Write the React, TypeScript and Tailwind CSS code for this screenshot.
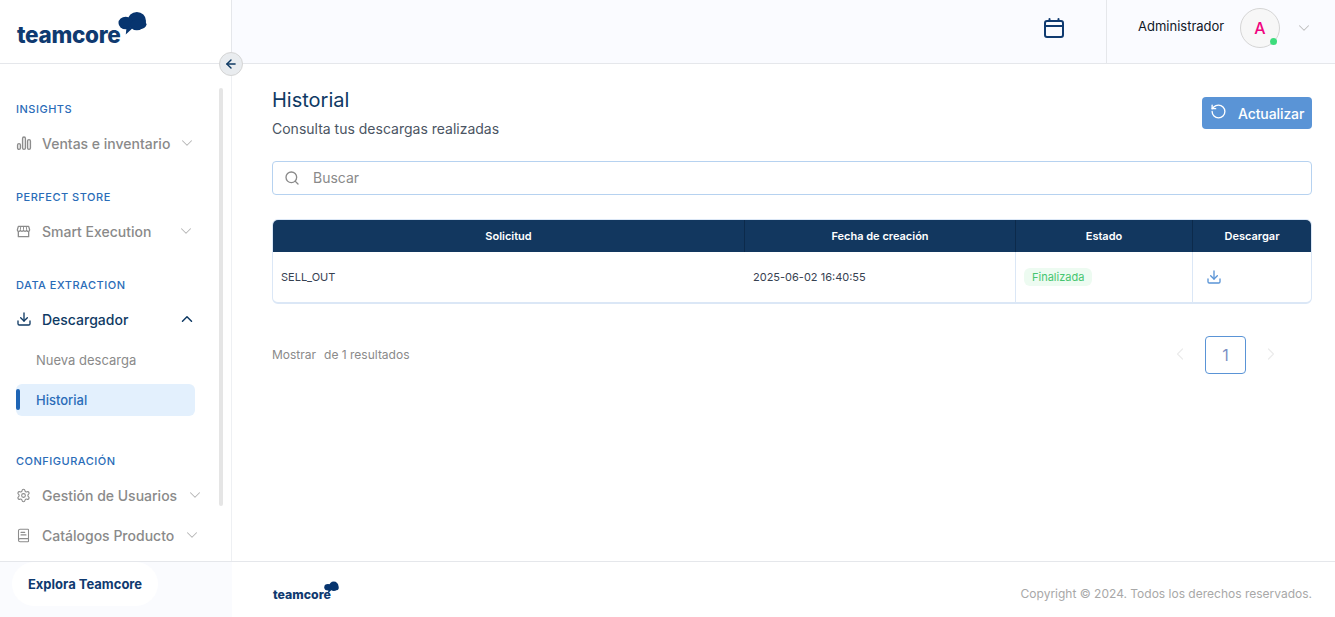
import React from 'react';
import { ArrowLeft, ChevronDown, ChevronLeft, ChevronRight, ChevronUp, Download, RotateCcw, Search, Settings, BookText } from 'lucide-react';

const font = "font-['Inter','Liberation_Sans',sans-serif]";

const Logo = ({ small }: { small?: boolean }) => (
  <div className={small ? 'relative mt-[2px] h-[20px] w-[66px]' : 'relative mb-[6px] ml-[1px] h-[36px] w-[130px]'}>
    <span
      className={
        small
          ? 'absolute bottom-[-3px] left-0 text-[12.3px] leading-[18px] font-extrabold text-[#0f3a70]'
          : 'absolute bottom-[-4px] left-0 text-[22.5px] leading-[32px] font-extrabold tracking-[-0.3px] text-[#0f3a70]'
      }
    >
      teamcore
    </span>
    <svg
      viewBox="0 0 30 24"
      className={small ? 'absolute top-0 right-0 h-[13px] w-[15px]' : 'absolute top-0 right-0 h-[25px] w-[29px]'}
      fill="#07356f"
    >
      <circle cx="19.500" cy="9.500" r="9.500" />
      <ellipse cx="8" cy="11.500" rx="7.500" ry="6.500" />
      <ellipse cx="21" cy="13" rx="8.500" ry="5" />
      <path d="M9 15 8 23.500 15 17z" />
    </svg>
  </div>
);

const SectionLabel = ({ children, className = '' }: { children: React.ReactNode; className?: string }) => (
  <div className={`ml-4 text-[11px] leading-[16px] font-medium tracking-[0.5px] text-[#2a6cb8] ${className}`}>{children}</div>
);

const BarsIcon = () => (
  <svg viewBox="0 0 16 16" className="h-[16px] w-[16px]" fill="none" stroke="#8c8c8c" strokeWidth="1.4">
    <rect x="1.600" y="8.600" width="2.800" height="5.800" rx="1.400" />
    <rect x="6.600" y="2" width="2.800" height="12.400" rx="1.400" />
    <rect x="11.600" y="4.600" width="2.800" height="9.800" rx="1.400" />
  </svg>
);

const StoreIcon = () => (
  <svg viewBox="0 0 16 16" className="h-[15px] w-[15px]" fill="none" stroke="#8c8c8c" strokeWidth="1.4" strokeLinejoin="round">
    <path d="M2.500 2.500h11l1 3.500a1.600 1.600 0 0 1-3.200.6 1.700 1.700 0 0 1-3.300 0 1.700 1.700 0 0 1-3.300 0A1.600 1.600 0 0 1 1.500 6z" />
    <path d="M2.500 8v5.500h11V8" />
    <path d="M5 2.500 4.700 6M8 2.500V6M11 2.500l.3 3.500" strokeWidth="1" />
  </svg>
);

const CalendarIcon = () => (
  <svg viewBox="0 0 20 20" className="h-[20px] w-[20px]" fill="none" stroke="#0f3a70" strokeWidth="2" strokeLinecap="round">
    <rect x="1" y="3" width="18" height="16" rx="2" />
    <path d="M1 8h18M5.500 1v2M14.500 1v2" />
  </svg>
);

const NavItem = ({ icon, label, chevronGap }: { icon: React.ReactNode; label: string; chevronGap: string }) => (
  <div className="ml-4 flex h-[24px] items-center text-[14px] font-medium text-[#8a8a8a]">
    <span className="flex w-[26px] shrink-0 items-center">{icon}</span>
    <span>{label}</span>
    <ChevronDown className={`h-[18px] w-[18px] stroke-[1.4] text-[#b5b5b5] ${chevronGap}`} />
  </div>
);

export default function App() {
  return (
    <div className={`relative flex h-screen w-full overflow-hidden bg-white ${font}`}>
      <aside className="flex w-[232px] shrink-0 flex-col">
        <div className="flex h-[64px] shrink-0 items-center border-r border-b border-[#e5e7eb] pr-[84px] pl-[16px]">
          <Logo />
        </div>
        <nav className="flex-1 overflow-hidden border-r border-[#eef0f3] pt-[37px]">
          <SectionLabel>INSIGHTS</SectionLabel>
          <div className="mt-[14px]">
            <NavItem icon={<BarsIcon />} label="Ventas e inventario" chevronGap="ml-[8px]" />
          </div>
          <SectionLabel className="mt-[34px]">PERFECT STORE</SectionLabel>
          <div className="mt-[14px]">
            <NavItem icon={<StoreIcon />} label="Smart Execution" chevronGap="ml-[26px]" />
          </div>
          <SectionLabel className="mt-[34px]">DATA EXTRACTION</SectionLabel>
          <div className="mt-[14px] ml-4 flex h-[24px] items-center text-[14px] font-medium text-[#0f3a64]">
            <span className="flex w-[26px] shrink-0 items-center">
              <Download className="h-[16px] w-[16px] stroke-[2] text-[#0f3a64]" />
            </span>
            <span>Descargador</span>
            <ChevronUp className="ml-[50px] h-[18px] w-[18px] stroke-[2] text-[#0f3a64]" />
          </div>
          <div className="mt-[18px] ml-[36px] flex h-[24px] items-center text-[13px] text-[#8a8a8a]">Nueva descarga</div>
          <div className="relative mt-[11px] ml-[16px] flex h-[32px] w-[179px] items-center rounded-[6px] bg-[#e3f0fd] pt-[1px] pl-[20px] text-[13px] font-medium text-[#2a6cb8]">
            <span className="absolute top-[5px] left-0 h-[21px] w-[4px] rounded-[2px] bg-[#1f65b5]" />
            Historial
          </div>
          <SectionLabel className="mt-[37px]">CONFIGURACIÓN</SectionLabel>
          <div className="mt-[14px]">
            <NavItem icon={<Settings className="h-[15px] w-[15px] stroke-[1.7] text-[#8c8c8c]" />} label="Gestión de Usuarios" chevronGap="ml-[9px]" />
          </div>
          <div className="mt-[16px]">
            <NavItem icon={<BookText className="h-[15px] w-[15px] stroke-[1.7] text-[#8c8c8c]" />} label="Catálogos Producto" chevronGap="ml-[9px]" />
          </div>
        </nav>
        <div className="flex h-[56px] shrink-0 items-start border-t border-[#e5e7eb] bg-[#fafbfe] pl-[12px]">
          <div className="flex h-[44px] w-[146px] items-center justify-center rounded-full bg-white pt-[1px] text-[13px] font-bold text-[#0f3a70]">
            Explora Teamcore
          </div>
        </div>
      </aside>

      <div className="flex min-w-0 flex-1 flex-col">
        <header className="flex h-[64px] shrink-0 items-center justify-end border-b border-[#e5e7eb] bg-[#fafbff]">
          <div className="mr-[42px] mb-[8px]">
            <CalendarIcon />
          </div>
          <div className="flex h-full w-[229px] items-center border-l border-[#e5e7eb] pb-[8px] pl-[31px]">
            <span className="mb-[2px] w-[102px] text-[13px] text-[#111827]">Administrador</span>
            <div className="relative flex h-[40px] w-[40px] items-center justify-center rounded-full border border-[#d5d5d5] bg-[#f7f7f7] text-[16px] font-medium text-[#f0047f]">
              A
              <span className="absolute right-[2px] bottom-[2px] h-[7px] w-[7px] rounded-full bg-[#3ddc7c]" />
            </div>
            <ChevronDown className="ml-[15px] h-[18px] w-[18px] stroke-[1.4] text-[#bdbdbd]" />
          </div>
        </header>

        <main className="flex-1 pt-[24px] pr-[23px] pl-[40px]">
          <div className="flex items-start justify-between">
            <div>
              <h1 className="text-[20px] leading-[24px] font-normal text-[#0f3a64]">Historial</h1>
              <p className="mt-[5px] text-[14px] leading-[24px] text-[#4b5563]">Consulta tus descargas realizadas</p>
            </div>
            <button className="mt-[9px] flex h-[32px] w-[110px] items-center rounded-[4px] bg-[#5a94d6] pl-[8px] text-[14px] font-medium text-white">
              <RotateCcw className="mb-[4px] h-[17px] w-[17px] stroke-[1.9]" />
              <span className="ml-[11px] tracking-[-0.1px]">Actualizar</span>
            </button>
          </div>

          <div className="mt-[20px] flex h-[34px] items-center rounded-[4px] border border-[#b6d2f0] pl-[11px] text-[14px] text-[#8a8a8a]">
            <Search className="h-[16px] w-[16px] stroke-[2] text-[#8a8a8a]" />
            <span className="mb-[1px] ml-[13px]">Buscar</span>
          </div>

          <div className="mt-[24px] overflow-hidden rounded-[6px] border border-b-2 border-[#dbe7f6]">
            <div className="grid h-[32px] grid-cols-[472px_271px_177px_1fr] items-center bg-[#12375f] text-center text-[11px] font-semibold text-white">
              <div className="flex h-full items-center justify-center border-r border-[#0c2a4b]">Solicitud</div>
              <div className="flex h-full items-center justify-center border-r border-[#0c2a4b]">Fecha de creación</div>
              <div className="flex h-full items-center justify-center border-r border-[#0c2a4b]">Estado</div>
              <div>Descargar</div>
            </div>
            <div className="grid h-[50px] grid-cols-[472px_271px_177px_1fr] items-center text-[11px] text-[#374151]">
              <div className="pl-[8px]">SELL_OUT</div>
              <div className="flex h-full items-center border-r border-[#dbe7f6] pl-[8px]">2025-06-02 16:40:55</div>
              <div className="flex h-full items-center border-r border-[#dbe7f6] pl-[8px]">
                <span className="rounded-[6px] bg-[#edfbf1] px-[8px] py-[1px] text-[#46c56f]">Finalizada</span>
              </div>
              <div className="pl-[13px]">
                <Download className="h-[16px] w-[16px] stroke-[2] text-[#5a94d6]" />
              </div>
            </div>
          </div>

          <div className="mt-[32px] flex items-center justify-between">
            <div className="text-[12px] text-[#8a8a8a]">
              <span>Mostrar</span>
              <span className="ml-[8px]">de 1 resultados</span>
            </div>
            <div className="mr-[31px] flex items-center">
              <ChevronLeft className="mb-[2px] h-[20px] w-[20px] stroke-[1.5] text-[#ececec]" />
              <div className="mx-[15px] flex h-[38px] w-[41px] items-center justify-center rounded-[4px] border border-[#5a94d6] text-[16px] text-[#7c8fc4]">
                1
              </div>
              <ChevronRight className="mb-[2px] h-[20px] w-[20px] stroke-[1.5] text-[#ececec]" />
            </div>
          </div>
        </main>

        <footer className="flex h-[56px] shrink-0 items-center justify-between border-t border-[#e5e7eb] pr-[23px] pl-[41px]">
          <Logo small />
          <span className="mt-[9px] text-[12px] text-[#a8a8a8]">Copyright © 2024. Todos los derechos reservados.</span>
        </footer>
      </div>

      {/* collapse button and sidebar scroll thumb sit over the panels */}
      <button className="absolute top-[52px] left-[219px] flex h-[24px] w-[24px] items-center justify-center rounded-full border border-[#d5d5d5] bg-[#e9ecef]">
        <ArrowLeft className="h-[14px] w-[14px] stroke-[2.5] text-[#0f3a64]" />
      </button>
      <div className="absolute top-[88px] left-[219px] h-[418px] w-[4px] rounded-full bg-[#e5e5e5]" />
    </div>
  );
}
